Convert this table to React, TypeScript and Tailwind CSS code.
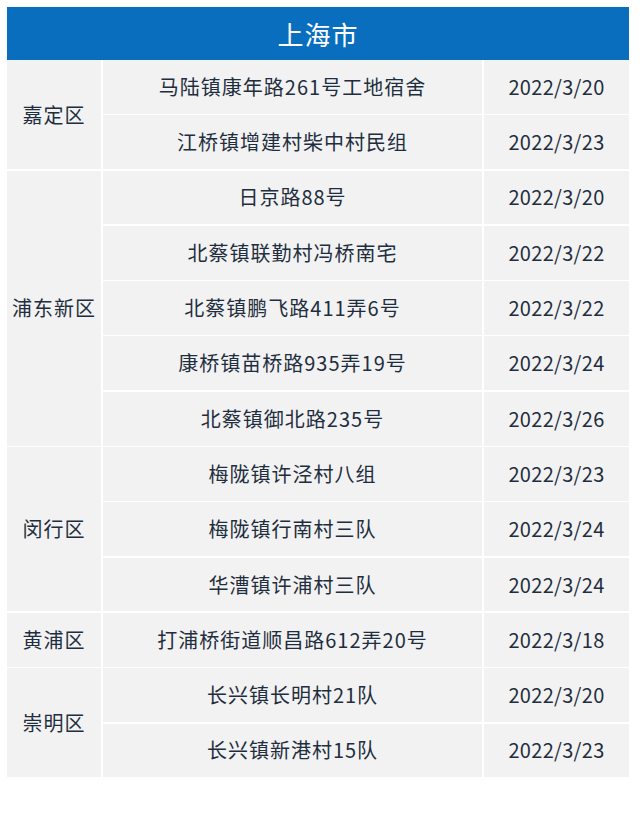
import React from "react";

const groups: { d: string; rows: [string, string][] }[] = [
  { d: "嘉定区", rows: [["马陆镇康年路261号工地宿舍", "2022/3/20"], ["江桥镇增建村柴中村民组", "2022/3/23"]] },
  {
    d: "浦东新区",
    rows: [
      ["日京路88号", "2022/3/20"],
      ["北蔡镇联勤村冯桥南宅", "2022/3/22"],
      ["北蔡镇鹏飞路411弄6号", "2022/3/22"],
      ["康桥镇苗桥路935弄19号", "2022/3/24"],
      ["北蔡镇御北路235号", "2022/3/26"],
    ],
  },
  {
    d: "闵行区",
    rows: [
      ["梅陇镇许泾村八组", "2022/3/23"],
      ["梅陇镇行南村三队", "2022/3/24"],
      ["华漕镇许浦村三队", "2022/3/24"],
    ],
  },
  { d: "黄浦区", rows: [["打浦桥街道顺昌路612弄20号", "2022/3/18"]] },
  { d: "崇明区", rows: [["长兴镇长明村21队", "2022/3/20"], ["长兴镇新港村15队", "2022/3/23"]] },
];

export default function App() {
  return (
    <div className="w-[640px] h-[826px] bg-white pt-[7px] pl-[7px] font-['Noto_Sans_CJK_SC','Noto_Sans',sans-serif]">
      <div className="w-[622px]">
        <div className="h-[53px] bg-[#0a6ebf] text-white text-[26px] flex items-center justify-center tracking-[1px]">上海市</div>
        <div className="flex flex-col gap-y-[1.5px] text-[20px] text-[#1f2e3e] leading-none">
          {groups.map((g) => (
            <div key={g.d} className="flex gap-x-[2px]">
              <div className="w-[94px] shrink-0 bg-[#f2f2f2] flex items-center justify-center tracking-[1px]">{g.d}</div>
              <div className="flex-1 flex flex-col gap-y-[1.5px]">
                {g.rows.map((row) => (
                  <div key={row[0]} className="h-[53.8px] flex gap-x-[2px]">
                    <div className="w-[379px] bg-[#f2f2f2] flex items-center justify-center tracking-[1px]">{row[0]}</div>
                    <div className="flex-1 bg-[#f2f2f2] flex items-center justify-center tracking-[0.3px]">{row[1]}</div>
                  </div>
                ))}
              </div>
            </div>
          ))}
        </div>
      </div>
    </div>
  );
}
